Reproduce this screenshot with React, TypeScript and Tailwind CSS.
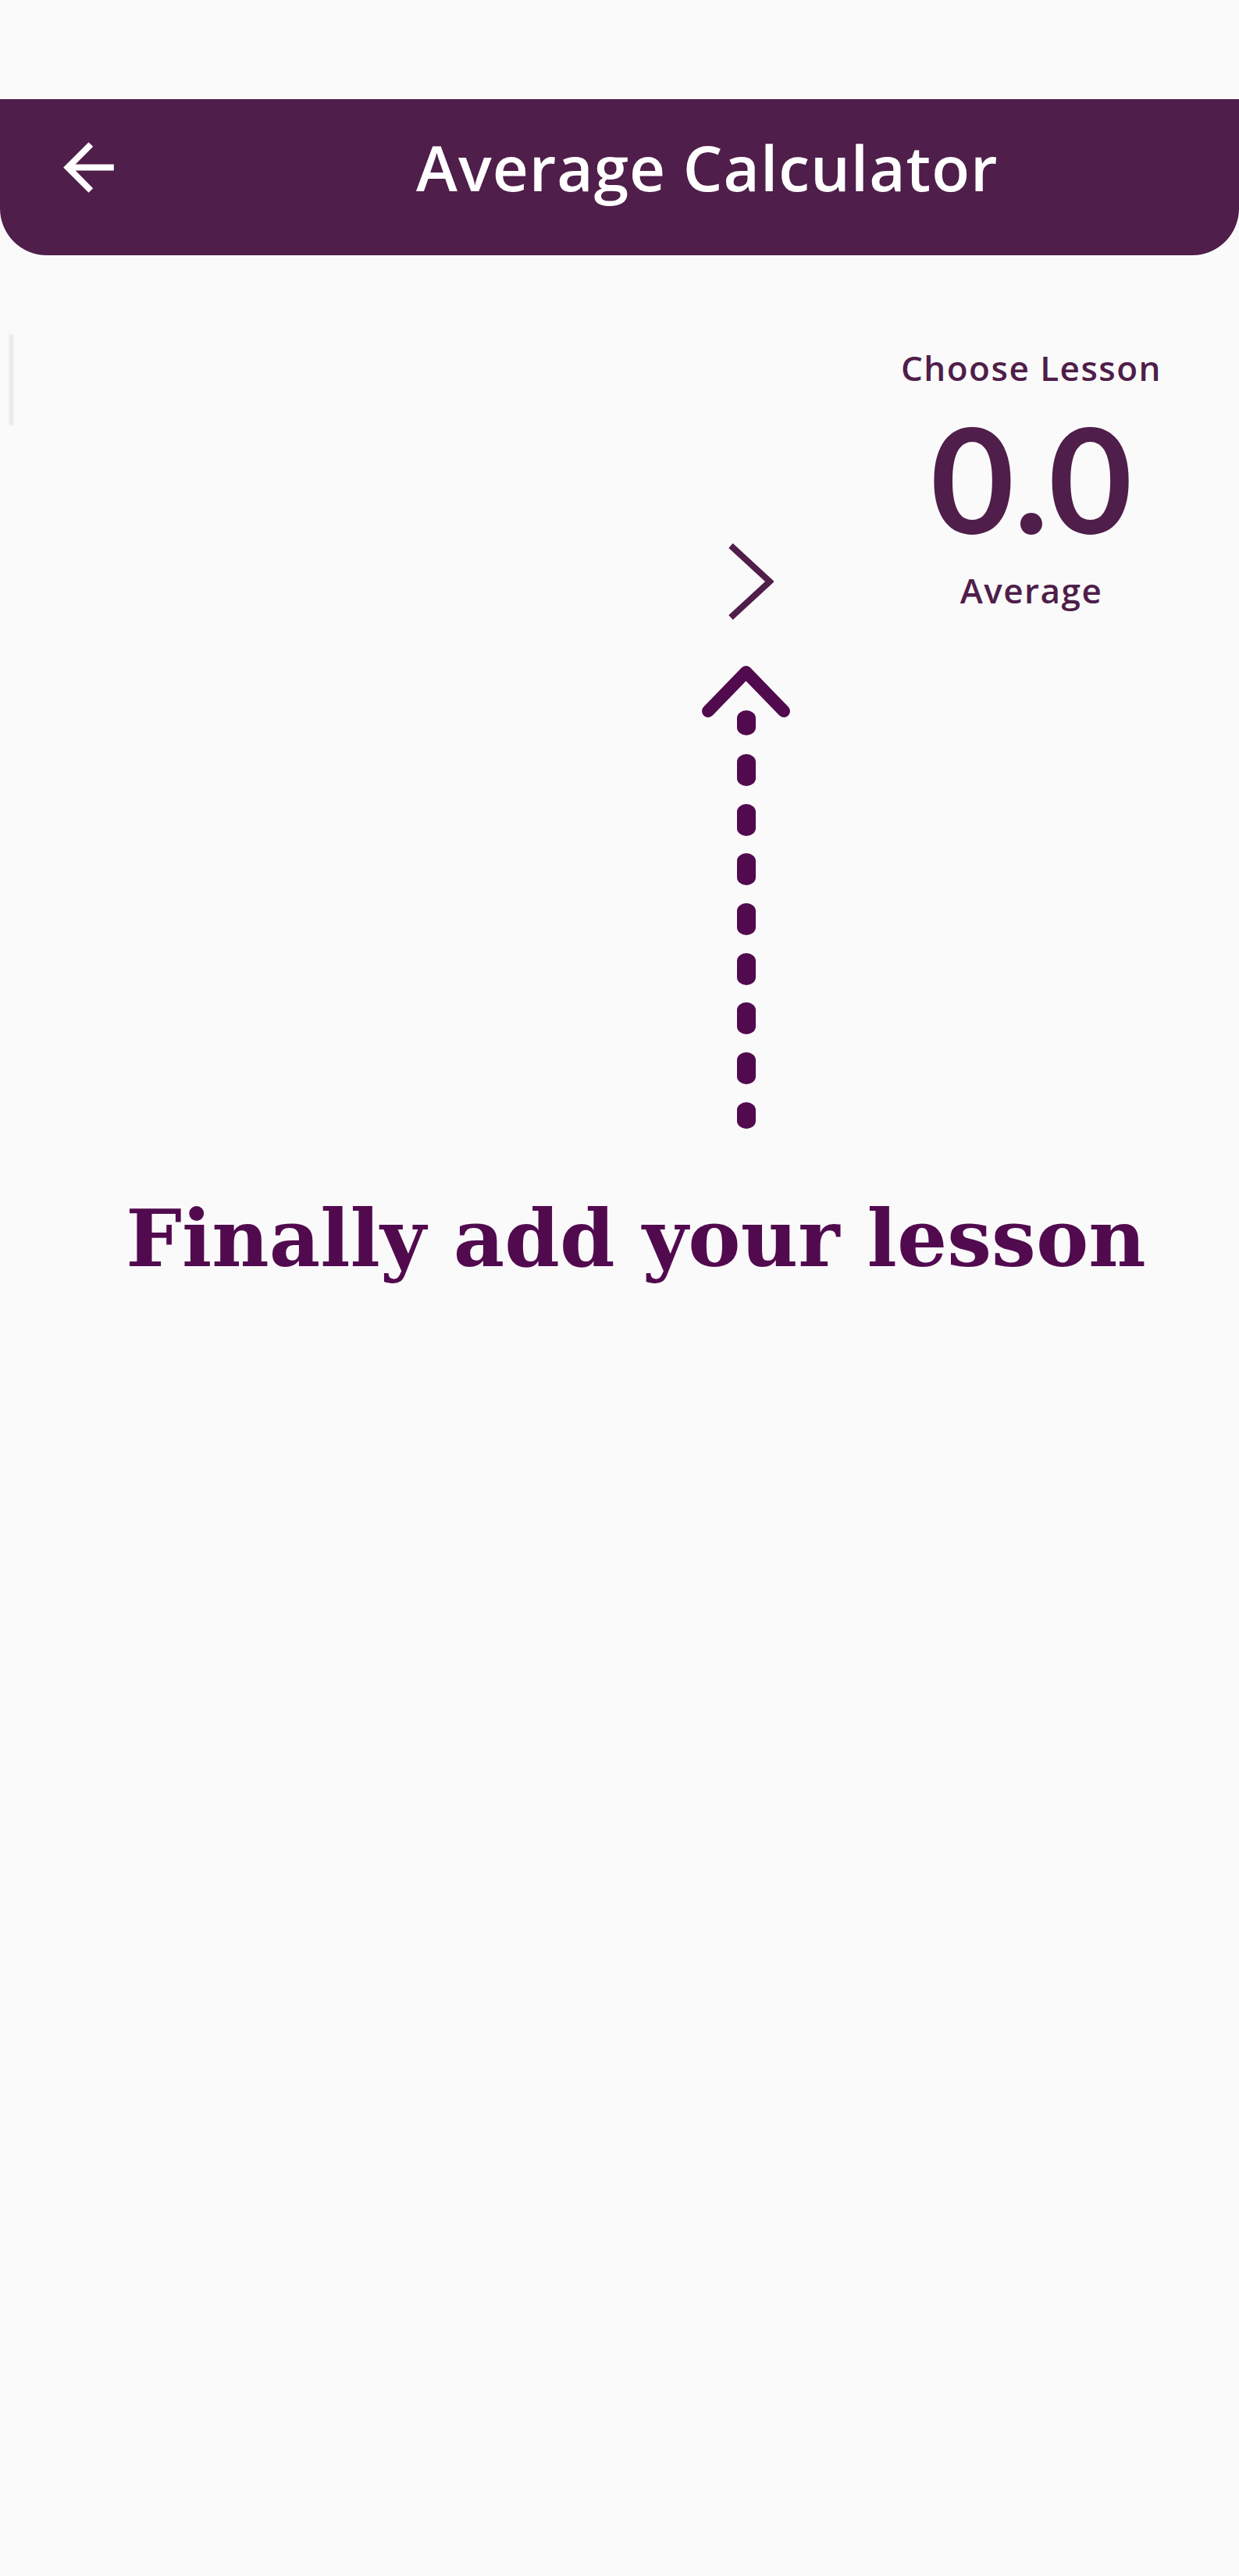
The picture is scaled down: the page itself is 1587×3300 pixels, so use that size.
import React from 'react';

const dotTops = [113, 177, 240, 304, 368, 431, 495];

export default function App() {
  return (
    <div className="min-h-[3300px] w-full bg-[#fafafa] font-['Open_Sans',sans-serif]">
      <div className="h-[127px]" />

      {/* app bar */}
      <header className="h-[200px] bg-[#4f1e4a] rounded-b-[60px] flex items-start pt-[39px] pl-[65px]">
        <button className="w-[97px] h-[97px] shrink-0">
          <svg viewBox="0 0 24 24" width="97" height="97" fill="#ffffff">
            <path d="M20 11H7.83l5.59-5.59L12 4l-8 8 8 8 1.41-1.41L7.83 13H20v-2z" />
          </svg>
        </button>
        <h1 className="ml-[371px] w-[744px] text-center whitespace-nowrap text-white text-[80px] leading-[96px] font-semibold tracking-[1px]">
          Average Calculator
        </h1>
      </header>

      {/* lesson row */}
      <div className="flex items-start">
        <div className="ml-[12px] mt-[101px] w-[5px] h-[117px] rounded-full bg-[#e8e8e8] blur-[1px]" />
        <div className="flex-1" />
        <div className="mt-[368px] mr-[160px]">
          <svg width="59" height="100" viewBox="0 0 59 100">
            <polyline points="4,4 54,50 4,96" fill="none" stroke="#4f1e4a" strokeWidth="8" />
          </svg>
        </div>
        <div className="w-[340px] mr-[96px] mt-[118px] flex flex-col items-center text-[#4f1e4a]">
          <p className="text-[44px] leading-[53px] font-semibold tracking-[1.5px] whitespace-nowrap">Choose Lesson</p>
          <p className="mt-[22px] font-['Lato',sans-serif] text-[185px] leading-none font-bold">0.0</p>
          <p className="mt-[25px] text-[44px] leading-[53px] font-semibold tracking-[1.5px]">Average</p>
        </div>
      </div>

      {/* coach mark */}
      <div className="mt-[58px] ml-[899px]">
        <svg width="113" height="593" viewBox="0 0 113 593">
          <polyline points="8,58 56.5,8 105,58" fill="none" stroke="#520a4f" strokeWidth="16" strokeLinecap="round" strokeLinejoin="round" />
          <rect x="45" y="57" width="24" height="32" rx="12" ry="10" fill="#520a4f" />
          {dotTops.map((t) => (
            <rect key={t} x="45" y={t} width="24" height="41" rx="12" ry="10" fill="#520a4f" />
          ))}
          <rect x="45" y="559" width="24" height="34" rx="12" ry="10" fill="#520a4f" />
        </svg>
      </div>
      <p className="mt-[90px] pl-[42px] text-center font-['DejaVu_Serif',serif] font-bold text-[101px] leading-none text-[#520a4f] whitespace-nowrap">
        Finally add your lesson
      </p>
    </div>
  );
}
